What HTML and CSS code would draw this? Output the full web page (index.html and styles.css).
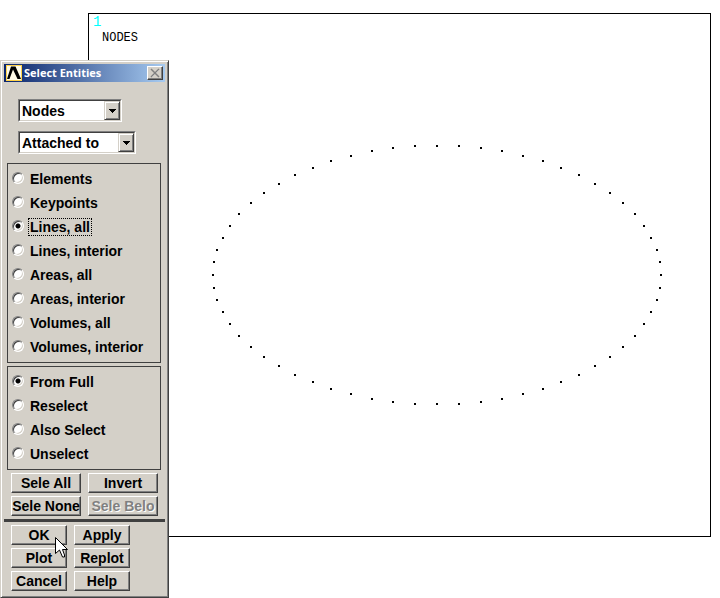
FILE: index.html
```html
<!DOCTYPE html>
<html lang="en">
<head>
<meta charset="utf-8">
<title>Select Entities</title>
<link rel="stylesheet" href="styles.css">
</head>
<body>
<main class="plot">
  <div class="plot-caption">
    <span class="plot-number">1</span>
    <span class="plot-title">NODES</span>
  </div>
  <svg id="nodes" class="plot-nodes" viewBox="0 0 621 522" role="img" aria-label="Nodes on an ellipse"></svg>
</main>

<form class="dialog" aria-labelledby="dialog-title">
  <header class="titlebar">
    <svg class="app-icon" viewBox="0 0 16 16" aria-hidden="true">
      <rect width="16" height="16" fill="#ffd24a"/>
      <rect x="1" y="1" width="14" height="14" fill="#fffbe8"/>
      <path d="M1 14 5 1.500H9.500L15 14H11.500L7 4.500 3.500 14Z" fill="#000"/>
    </svg>
    <h1 id="dialog-title">Select Entities</h1>
    <button type="button" class="close" aria-label="Close">
      <svg viewBox="0 0 10 8" aria-hidden="true"><path d="M2 1 9 8M9 1 2 8" stroke="#fff"/><path d="M1 0 9 8M9 0 1 8" stroke="#808080" stroke-width="1.500"/></svg>
    </button>
  </header>

  <div class="selectors">
    <span class="combo combo-entity">
      <select aria-label="Entity type"><option>Nodes</option><option>Elements</option></select>
      <span class="arrow"><svg viewBox="0 0 7 4" aria-hidden="true"><path d="M0 0H7V1H6V2H5V3H4V4H3V3H2V2H1V1H0Z"/></svg></span>
    </span>
    <span class="combo combo-criterion">
      <select aria-label="Selection criterion"><option>Attached to</option><option>By Location</option></select>
      <span class="arrow"><svg viewBox="0 0 7 4" aria-hidden="true"><path d="M0 0H7V1H6V2H5V3H4V4H3V3H2V2H1V1H0Z"/></svg></span>
    </span>
  </div>

  <div class="group" role="radiogroup" aria-label="Attached to">
    <label><input type="radio" name="attached"><span>Elements</span></label>
    <label><input type="radio" name="attached"><span>Keypoints</span></label>
    <label><input type="radio" name="attached" checked><span class="focused">Lines, all</span></label>
    <label><input type="radio" name="attached"><span>Lines, interior</span></label>
    <label><input type="radio" name="attached"><span>Areas, all</span></label>
    <label><input type="radio" name="attached"><span>Areas, interior</span></label>
    <label><input type="radio" name="attached"><span>Volumes, all</span></label>
    <label><input type="radio" name="attached"><span>Volumes, interior</span></label>
  </div>

  <div class="group" role="radiogroup" aria-label="Selection mode">
    <label><input type="radio" name="mode" checked><span>From Full</span></label>
    <label><input type="radio" name="mode"><span>Reselect</span></label>
    <label><input type="radio" name="mode"><span>Also Select</span></label>
    <label><input type="radio" name="mode"><span>Unselect</span></label>
  </div>

  <div class="buttons buttons-wide">
    <button type="button">Sele All</button>
    <button type="button">Invert</button>
    <button type="button">Sele None</button>
    <button type="button" disabled>Sele Belo</button>
  </div>
  <hr class="rule">
  <div class="buttons buttons-narrow">
    <button type="button">OK</button>
    <button type="button">Apply</button>
    <button type="button">Plot</button>
    <button type="button">Replot</button>
    <button type="button">Cancel</button>
    <button type="button">Help</button>
  </div>
</form>

<svg class="cursor" viewBox="0 0 13 21" aria-hidden="true">
  <path d="M.5 .5V16.500L4.500 13 7.500 20H9.500V18L7.500 12.500H12.500Z" fill="#fff" stroke="#000"/>
</svg>
<script src="nodes.js"></script>
</body>
</html>
```
FILE: styles.css
```css
* { box-sizing: border-box; }

body {
  margin: 0;
  padding: 13px 9px 61px 88px;
  background: #fff;
  color: #000;
  font: bold 14px/16px "Liberation Sans", sans-serif;
}

.plot {
  position: relative;
  border: 1px solid #000;
}

.plot-nodes {
  display: block;
  width: 100%;
  shape-rendering: crispEdges;
}

.plot-caption {
  position: absolute;
  top: 0;
  left: 4px;
  font: 12px/16px "Liberation Mono", monospace;
}

.plot-number { display: block; color: #00ffff; font-size: 14px; }
.plot-title { display: block; padding-left: 9px; }

.dialog {
  position: absolute;
  top: 60px;
  left: 0;
  width: 169px;
  padding: 3px 3px 6px;
  border: 1px solid;
  border-color: #d4d0c8 #404040 #404040 #d4d0c8;
  box-shadow: inset 1px 1px #fff, inset -1px -1px #808080;
  background: #d4d0c8;
}

.titlebar {
  display: flex;
  align-items: center;
  gap: 2px;
  height: 18px;
  padding: 0 2px;
  background: linear-gradient(90deg, #0a246a, #a6caf0);
}

.titlebar h1 {
  flex: 1;
  margin: 0;
  color: #fff;
  font: bold 11px/16px "Open Sans", "Noto Sans", sans-serif;
}

.app-icon { width: 16px; height: 16px; }

button {
  padding: 0;
  border: 1px solid;
  border-color: #fff #404040 #404040 #fff;
  box-shadow: inset -1px -1px #808080;
  background: #d4d0c8;
  color: #000;
  font: inherit;
  white-space: nowrap;
}

.close {
  display: flex;
  align-items: center;
  justify-content: center;
  width: 16px;
  height: 14px;
}

.close svg { width: 10px; height: 8px; fill: none; overflow: visible; }

.selectors {
  display: flex;
  flex-direction: column;
  gap: 9px;
  padding: 17px 14px 9px;
}

.combo {
  position: relative;
  display: block;
  height: 23px;
  border: 1px solid;
  border-color: #808080 #fff #fff #808080;
}

.combo-entity { width: 104px; }
.combo-criterion { width: 118px; }

.combo select {
  display: block;
  appearance: none;
  width: 100%;
  height: 21px;
  padding: 0 18px 0 2px;
  border: 1px solid;
  border-color: #404040 #d4d0c8 #d4d0c8 #404040;
  border-radius: 0;
  background: #fff;
  color: #000;
  font: inherit;
}

.arrow {
  position: absolute;
  top: 1px;
  right: 1px;
  bottom: 1px;
  display: flex;
  align-items: center;
  justify-content: center;
  width: 16px;
  border: 1px solid;
  border-color: #d4d0c8 #404040 #404040 #d4d0c8;
  box-shadow: inset 1px 1px #fff, inset -1px -1px #808080;
  background: #d4d0c8;
  pointer-events: none;
}

.arrow svg { width: 7px; height: 4px; shape-rendering: crispEdges; }

.group {
  margin: 0 4px 3px 3px;
  padding: 3px 4px;
  border: 1px solid #404040;
}

.group label {
  display: flex;
  align-items: center;
  gap: 5px;
  height: 24px;
}

.group span { padding: 0 1px; }

.group .focused { outline: 1px dotted #000; }

input[type="radio"] {
  appearance: none;
  width: 12px;
  height: 12px;
  margin: 0 0 2px;
  border: 1px solid;
  border-color: #808080 #fff #fff #808080;
  border-radius: 50%;
  box-shadow: inset 1px 1px #404040, inset -1px -1px #d4d0c8;
  background: #fff;
}

input[type="radio"]:checked {
  background: radial-gradient(circle, #000 2px, #fff 3px);
}

.buttons {
  display: grid;
  gap: 3px 7px;
  padding: 0 7px;
}

.buttons-wide { grid-template-columns: 70px 70px; }
.buttons-narrow { grid-template-columns: 56px 56px; }

.buttons button { height: 20px; }

button:disabled { color: #808080; text-shadow: 1px 1px #fff; }

.rule {
  height: 3px;
  margin: 3px 0;
  border: 0;
  background: #404040;
}

.cursor {
  position: absolute;
  top: 537px;
  left: 55px;
  width: 13px;
  height: 21px;
}
```
FILE: nodes.js
```js
// Upper-left quadrant of the ellipse; the other three are its reflections.
const quadrant = [
  [124, 261], [125, 248], [128, 236], [134, 224], [141, 212],
  [150, 200], [162, 189], [175, 179], [190, 170], [206, 161],
  [224, 154], [242, 147], [262, 142], [283, 137], [304, 134],
  [326, 132], [348, 132]
];
const svg = document.getElementById("nodes");
for (const [x, y] of quadrant) {
  for (const px of new Set([x, 696 - x])) {
    for (const py of new Set([y, 522 - y])) {
      const node = document.createElementNS("http://www.w3.org/2000/svg", "rect");
      node.setAttribute("x", px - 1);
      node.setAttribute("y", py - 1);
      node.setAttribute("width", 2);
      node.setAttribute("height", 2);
      svg.append(node);
    }
  }
}
```
